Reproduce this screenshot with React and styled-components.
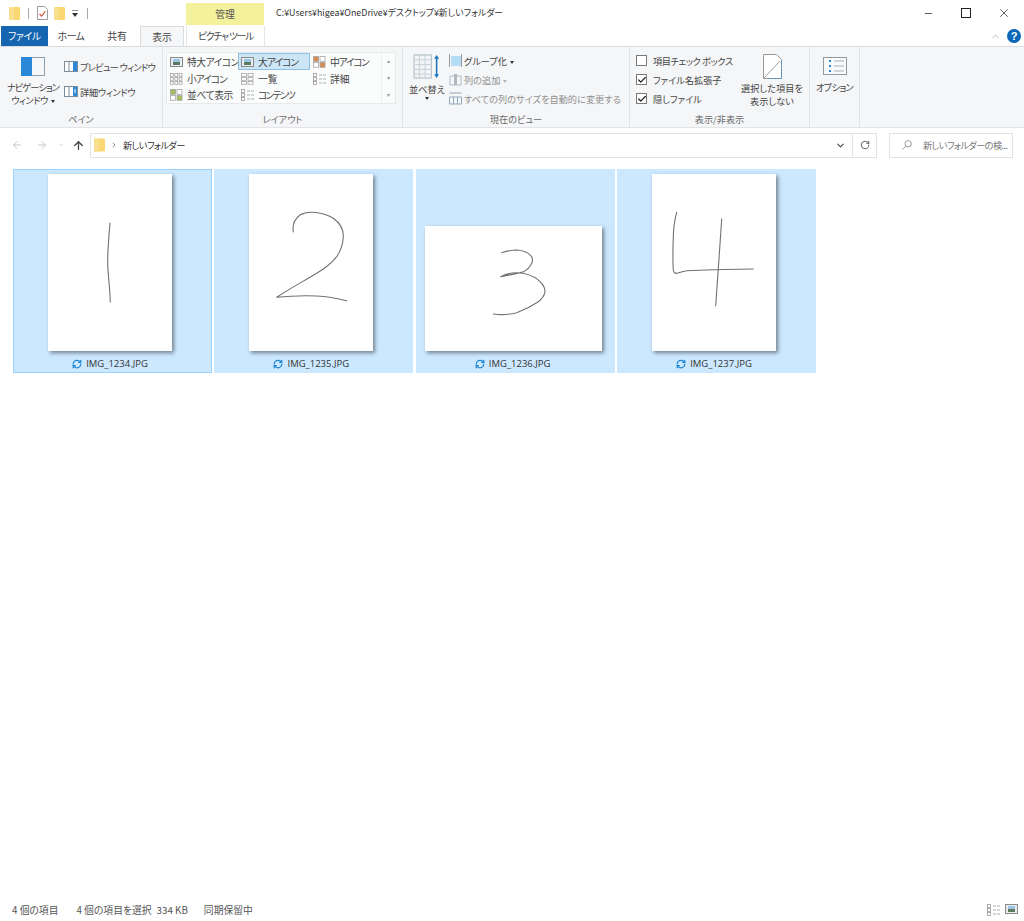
import React from 'react'
import styled, { createGlobalStyle } from 'styled-components'
import { ArrowLeft, ArrowRight, ArrowUp, ChevronDown, ChevronRight, ChevronUp, RotateCw, RefreshCw, Minus, X, Check } from 'lucide-react'

const GlobalStyle = createGlobalStyle`
  html, body {
    margin: 0;
    padding: 0;
    background: #fff;
    overflow: hidden;
    font-family: "Noto Sans CJK JP", "Noto Sans", sans-serif;
    color: #3c3c3c;
  }
  * { box-sizing: border-box; }
  svg { flex: none; }
`

const Window = styled.div`
  width: 1024px;
  height: 921px;
  display: flex;
  flex-direction: column;
  font-size: 9.8px;
  line-height: 12px;
  font-feature-settings: "palt";
`

// kana runs are set much narrower than kanji in the reference
const Tight = styled.span`
  letter-spacing: ${p => p.$ls}px;
  white-space: nowrap;
`

/* title bar */
const TitleBar = styled.div`
  height: 26px;
  display: flex;
  align-items: flex-start;
  padding-left: 9px;
`

const Quick = styled.div`
  width: 177px;
  height: 26px;
  display: flex;
  align-items: center;
  gap: 6px;
`

const QuickSep = styled.span`
  width: 1px;
  height: 11px;
  background: #a8a8a8;
  margin: 0 ${p => p.$m || 2}px;
`

const ManageTab = styled.div`
  width: 78px;
  height: 22px;
  margin-top: 3px;
  background: #f4f19d;
  display: flex;
  align-items: center;
  justify-content: center;
  color: #555;
`

const TitleText = styled.div`
  margin-left: 12px;
  margin-top: 7px;
  color: #333;
  flex: 1;
  font-size: 8.9px;
`

const WinButtons = styled.div`
  display: flex;
  width: 115px;
  height: 26px;
  padding-right: 1px;
  align-items: center;
  color: #222;
  & > span {
    flex: 1;
    display: flex;
    justify-content: center;
  }
`

/* tabs */
const TabRow = styled.div`
  height: 20px;
  display: flex;
  align-items: stretch;
  padding-left: 1px;
  position: relative;
`

const Tab = styled.div`
  width: ${p => p.$w}px;
  margin-left: ${p => p.$ml || 0}px;
  display: flex;
  align-items: center;
  justify-content: center;
  white-space: nowrap;
  color: ${p => (p.$file ? '#fff' : '#444')};
  background: ${p => (p.$file ? '#1565b0' : p.$active ? '#f5f6f7' : 'transparent')};
  border: ${p => (p.$active ? '1px solid #dadbdc' : 'none')};
  border-bottom: none;
`

const PictureTab = styled(Tab)`
  background: #fff;
  border: 1px solid #e6e6e6;
  border-top: none;
  border-bottom: none;
`

const HelpArea = styled.div`
  margin-left: auto;
  display: flex;
  align-items: center;
  gap: 6px;
  padding-right: 3px;
`

const HelpDot = styled.span`
  width: 14px;
  height: 14px;
  border-radius: 50%;
  background: #0b68b8;
  color: #fff;
  font: bold 11px/14px "Liberation Sans", sans-serif;
  text-align: center;
`

/* ribbon */
const Ribbon = styled.div`
  height: 82px;
  display: flex;
  background: #f5f6f7;
  border-top: 1px solid #dadbdc;
  border-bottom: 1px solid #e3e4e5;
  font-size: 9.2px;
`

const Group = styled.div`
  width: ${p => p.$w}px;
  display: flex;
  flex-direction: column;
  border-right: 1px solid #e2e3e4;
`

const GroupBody = styled.div`
  flex: 1;
  display: flex;
  min-height: 0;
  position: relative;
`

const GroupLabel = styled.div`
  height: 18px;
  text-align: center;
  color: #6a6a6a;
  line-height: 20px;
`

const BigButton = styled.div`
  width: ${p => p.$w}px;
  margin-left: ${p => p.$ml || 0}px;
  padding-top: ${p => p.$pt || 8}px;
  display: flex;
  flex-direction: column;
  align-items: center;
  text-align: center;
  color: #444;
  white-space: nowrap;
  line-height: 13px;
  & > svg { margin-bottom: ${p => p.$gap ?? 5}px; }
`

const SmallCol = styled.div`
  display: flex;
  flex-direction: column;
  flex: none;
  width: ${p => (p.$w ? `${p.$w}px` : 'auto')};
  margin-left: ${p => p.$ml || 0}px;
  padding-top: ${p => p.$pt || 0}px;
  gap: ${p => p.$gap || 0}px;
`

const SmallRow = styled.div`
  height: ${p => p.$h || 19}px;
  display: flex;
  align-items: center;
  gap: 2px;
  white-space: nowrap;
  color: ${p => (p.$muted ? '#8f8f8f' : '#444')};
`

const Caret = styled.span`
  display: inline-block;
  width: 0;
  height: 0;
  margin-left: ${p => p.$ml ?? 3}px;
  vertical-align: middle;
  border-left: 2.5px solid transparent;
  border-right: 2.5px solid transparent;
  border-top: 3px solid ${p => p.$color || '#333'};
`

const SortCaret = styled(Caret)`
  margin: 1px 0 0;
`

const Gallery = styled.div`
  margin: 5px 0 0 3px;
  width: 230px;
  height: 52px;
  display: flex;
  background: #fbfcfc;
  border: 1px solid #e8e9ea;
  font-size: 9.8px;
`

const GalleryGrid = styled.div`
  flex: 1;
  display: grid;
  grid-template-columns: 71px 72px 1fr;
  grid-template-rows: 17px 17px 16px;
`

const GalleryItem = styled.div`
  display: flex;
  align-items: center;
  gap: 4px;
  padding-left: 2px;
  white-space: nowrap;
  color: #444;
  background: ${p => (p.$on ? '#cde6f7' : 'transparent')};
  border: 1px solid ${p => (p.$on ? '#8fc1e3' : 'transparent')};
`

const GalleryScroll = styled.div`
  width: 14px;
  display: flex;
  flex-direction: column;
  align-items: center;
  justify-content: space-around;
  border-left: 1px solid #eeeff0;
  color: #9a9a9a;
  font-size: 6px;
`

const Box = styled.span`
  width: 11px;
  height: 11px;
  flex: none;
  border: 1px solid #7a7a7a;
  background: #fff;
  display: flex;
  align-items: center;
  justify-content: center;
  margin-right: 4px;
  color: #222;
`

/* address bar */
const AddressRow = styled.div`
  height: 34px;
  display: flex;
  align-items: center;
  padding: 0 11px 0 0;
  font-size: 9.2px;
`

const NavArrows = styled.div`
  width: 90px;
  display: flex;
  align-items: center;
  padding-left: 11px;
  color: #c8c8c8;
  & > svg:nth-child(2) { margin-left: 13px; }
  & > svg:nth-child(3) { margin-left: 9px; }
  & > svg:nth-child(4) { margin-left: 7px; color: #444; }
`

const AddressBox = styled.div`
  width: 787px;
  height: 25px;
  display: flex;
  align-items: center;
  border: 1px solid #e3e3e3;
  padding-left: 3px;
  color: #333;
  gap: 5px;
`

const AddressEnd = styled.div`
  margin-left: auto;
  display: flex;
  align-items: center;
  height: 100%;
  & > span {
    width: 24px;
    height: 100%;
    display: flex;
    align-items: center;
    justify-content: center;
    color: #444;
  }
  & > span:last-child { border-left: 1px solid #e3e3e3; }
`

const SearchBox = styled.div`
  margin-left: 12px;
  width: 124px;
  height: 25px;
  display: flex;
  align-items: center;
  border: 1px solid #e3e3e3;
  padding-left: 12px;
  gap: 11px;
  color: #777;
  white-space: nowrap;
`

/* files */
const FileArea = styled.div`
  flex: 1;
  display: flex;
  align-items: flex-start;
  gap: 2.33px;
  padding: 7px 0 0 13px;
`

const FileItem = styled.div`
  width: 199px;
  height: 204px;
  background: #cce8ff;
  border: 1px solid ${p => (p.$first ? '#99d1ff' : '#cce8ff')};
  padding: 4px 5px 0 0;
  display: flex;
  flex-direction: column;
  align-items: center;
`

const ThumbSlot = styled.div`
  flex: none;
  height: 177px;
  padding-left: ${p => (p.$wide ? 2 : 0)}px;
  display: flex;
  align-items: flex-end;
`

const Thumb = styled.svg`
  display: block;
  background: #fff;
  box-shadow: 2px 2px 4px rgba(0, 0, 0, 0.45);
`

const FileName = styled.div`
  flex: 1;
  padding-top: 4px;
  display: flex;
  align-items: center;
  gap: 4px;
  color: #333;
  font-family: "Open Sans", "Noto Sans", sans-serif;
  font-size: 9.5px;
`

/* status bar */
const StatusBar = styled.div`
  height: 22px;
  display: flex;
  align-items: center;
  padding: 0 6px 0 12px;
  color: #555;
`

const StatusText = styled.span`
  margin-left: ${p => p.$ml || 0}px;
`

const StatusIcons = styled.div`
  margin-left: auto;
  display: flex;
  gap: 5px;
`

const Folder = ({ w = 11, h = 13 }) => (
  <svg width={w} height={h} viewBox="0 0 11 13">
    <rect x="0" y="0" width="11" height="13" rx="1" fill="#fbd774" />
    <rect x="0" y="0" width="5" height="13" fill="#f8e08e" />
  </svg>
)

const Tiles = ({ c = 3, r = 3, color = '#a5a5a5', accent }) => (
  <svg width="13" height="12" viewBox="0 0 13 12">
    {Array.from({ length: r * c }).map((_, i) => (
      <rect
        key={i}
        x={(i % c) * (13 / c) + 0.5}
        y={Math.floor(i / c) * (12 / r) + 0.5}
        width={13 / c - 1.5}
        height={12 / r - 1.2}
        fill={accent && i % 3 === 0 ? accent : '#fff'}
        stroke={color}
        strokeWidth="0.8"
      />
    ))}
  </svg>
)

const ListIcon = ({ rows = 3 }) => (
  <svg width="13" height="12" viewBox="0 0 13 12">
    {Array.from({ length: rows }).map((_, i) => (
      <g key={i} stroke="#9a9a9a" strokeWidth="0.8">
        <rect x="0.5" y={i * 4 + 0.5} width="3" height="3" fill="#fff" />
        <path d={`M6 ${i * 4 + 2}h7`} strokeDasharray="3 1" />
      </g>
    ))}
  </svg>
)

const LargeIcon = ({ w = 13, h = 10 }) => (
  <svg width={w} height={h} viewBox="0 0 13 10">
    <rect x="0.5" y="0.5" width="12" height="9" fill="#e9eef2" stroke="#8a8a8a" />
    <rect x="3" y="5" width="7" height="3" fill="#5e7a5e" />
    <rect x="3" y="2" width="7" height="3" fill="#9cc4e4" />
  </svg>
)

const PaneIcon = ({ detail }) => (
  <svg width="14" height="11" viewBox="0 0 14 11">
    <rect x="0.5" y="0.5" width="13" height="10" fill="#fff" stroke="#7c8c99" />
    <path d="M5 1v9" stroke="#7c8c99" />
    <rect x="9" y="1" width="4" height="9" fill="#2c8ad8" />
    {detail && <path d="M10 4h2M10 6h2" stroke="#fff" />}
  </svg>
)

const Thumbnail = ({ w, h, paths }) => (
  <Thumb width={w} height={h} viewBox={`0 0 ${w} ${h}`}>
    {paths.map(d => (
      <path key={d} d={d} fill="none" stroke="#6f7370" strokeWidth="1.1" strokeLinecap="round" strokeLinejoin="round" />
    ))}
  </Thumb>
)

const files = [
  { name: 'IMG_1234.JPG', w: 124, h: 177, paths: ['M62 49C61 62 59.5 76 59.7 89C60 102 62 115 62.3 128'] },
  { name: 'IMG_1235.JPG', w: 124, h: 177, paths: ['M44.3 58C43 50 47 44 51 41C55 38.5 60 38 64.3 38.3C72 39 79 41 84.3 44.3C91 49 94.5 56 94.3 62.7C94 70 91.5 77 87.7 82.7C82 90 75 95 67.7 99.3C55 107 40 115 27.7 123.3C40 122 55 121.5 67.7 122C78 122.5 89 124.5 97.7 126.7'] },
  { name: 'IMG_1236.JPG', w: 177, h: 125, paths: ['M76.7 26.7C82 25 87 24 91.7 24C98 24.5 104 27 106.7 30.7C108 34 108 35 106.7 37.3C105 41 102 44 98.3 45.7C91 48 82 49.5 75.7 50.7C83 47 91 46 98.3 47.3C106 49 113 53 116.7 57.3C119 60 120 63 120 65.7C119.5 69 117 73 113.3 75.7C107 80 99 84 91.7 86.7C84 88.5 75 89 68.3 88'] },
  { name: 'IMG_1237.JPG', w: 124, h: 177, paths: ['M24.7 38.3C22.5 46 21.5 55 21.3 62.7C21 73 20.5 85 21.3 96C21.7 98.5 23 99.7 24.7 99.3C28 99 31 97 34.7 96.7C56 96 80 95.3 101.3 95', 'M69.7 45C68 72 65.5 105 63.7 131.7'] },
]

const App = () => (
  <Window>
    <GlobalStyle />
    <TitleBar>
      <Quick>
        <Folder />
        <QuickSep />
        <svg width="11" height="14" viewBox="0 0 11 14">
          <path d="M.5.5h7l3 3v10H.5z" fill="#fff" stroke="#9a9a9a" />
          <path d="M2.5 8l2 2 4-5" fill="none" stroke="#d8583c" strokeWidth="1.2" />
        </svg>
        <Folder />
        <svg width="8" height="7" viewBox="0 0 8 7">
          <path d="M1 0h6" stroke="#333" />
          <path d="M1 3h6L4 7z" fill="#333" />
        </svg>
        <QuickSep $m={0} />
      </Quick>
      <ManageTab>管理</ManageTab>
      <TitleText>C:¥Users¥higea¥OneDrive¥デスクトップ¥新しいフォルダー</TitleText>
      <WinButtons>
        <span><Minus size={11} strokeWidth={1.6} /></span>
        <span>
          <svg width="10" height="10" viewBox="0 0 10 10">
            <rect x="0.5" y="0.5" width="9" height="9" fill="none" stroke="currentColor" />
          </svg>
        </span>
        <span><X size={14} strokeWidth={1.2} /></span>
      </WinButtons>
    </TitleBar>

    <TabRow>
      <Tab $file $w={47}><Tight $ls={-0.2}>ファイル</Tight></Tab>
      <Tab $w={46}><Tight $ls={-0.5}>ホーム</Tight></Tab>
      <Tab $w={46}>共有</Tab>
      <Tab $active $w={44}>表示</Tab>
      <PictureTab $w={79} $ml={2}><Tight $ls={-1.2}>ピクチャ ツール</Tight></PictureTab>
      <HelpArea>
        <ChevronUp size={11} color="#b5b5b5" />
        <HelpDot>?</HelpDot>
      </HelpArea>
    </TabRow>

    <Ribbon>
      <Group $w={163}>
        <GroupBody>
          <BigButton $w={58} $ml={4} $pt={10}>
            <svg width="24" height="19" viewBox="0 0 24 19">
              <rect x="0.5" y="0.5" width="23" height="18" fill="#f4f6f8" stroke="#8ca0b0" />
              <rect x="0" y="0" width="11" height="19" fill="#2b88d8" />
            </svg>
            <Tight $ls={-0.9}>ナビゲーション</Tight>
            <span><Tight $ls={-0.5}>ウィンドウ</Tight><Caret /></span>
          </BigButton>
          <SmallCol $ml={2} $pt={10} $gap={6}>
            <SmallRow><PaneIcon /><Tight $ls={-0.7}>プレビュー ウィンドウ</Tight></SmallRow>
            <SmallRow><PaneIcon detail /><Tight $ls={-0.3}>詳細ウィンドウ</Tight></SmallRow>
          </SmallCol>
        </GroupBody>
        <GroupLabel>ペイン</GroupLabel>
      </Group>

      <Group $w={240}>
        <GroupBody>
          <Gallery>
            <GalleryGrid>
              <GalleryItem><LargeIcon /><Tight $ls={-0.5}>特大アイコン</Tight></GalleryItem>
              <GalleryItem $on><LargeIcon /><Tight $ls={-1}>大アイコン</Tight></GalleryItem>
              <GalleryItem><Tiles c={2} r={2} accent="#d98a4a" /><Tight $ls={-1.3}>中アイコン</Tight></GalleryItem>
              <GalleryItem><Tiles /><Tight $ls={-1.1}>小アイコン</Tight></GalleryItem>
              <GalleryItem><Tiles c={2} />一覧</GalleryItem>
              <GalleryItem><ListIcon />詳細</GalleryItem>
              <GalleryItem><Tiles c={2} r={2} accent="#a8bc58" /><Tight $ls={-0.4}>並べて表示</Tight></GalleryItem>
              <GalleryItem><ListIcon /><Tight $ls={-1.7}>コンテンツ</Tight></GalleryItem>
            </GalleryGrid>
            <GalleryScroll>
              <span>▴</span>
              <span>▾</span>
              <span>▾</span>
            </GalleryScroll>
          </Gallery>
        </GroupBody>
        <GroupLabel>レイアウト</GroupLabel>
      </Group>

      <Group $w={227}>
        <GroupBody>
          <BigButton $w={42} $ml={3} $pt={7} $gap={4}>
            <svg width="28" height="25" viewBox="0 0 28 26">
              <rect x="0.5" y="1" width="18" height="24" fill="#f2f4f5" stroke="#a9b6c0" />
              <path d="M1 6h18M1 11h18M1 16h18M1 21h18M6 1v24M12 1v24" stroke="#c5cfd6" />
              <path d="M24 3v20" stroke="#1c74bd" strokeWidth="1.6" />
              <path d="M21.5 5L24 1l2.5 4zM21.5 21L24 25l2.5-4z" fill="#1c74bd" />
            </svg>
            <span>並べ替え</span>
            <SortCaret />
          </BigButton>
          <SmallCol $ml={1} $pt={4}>
            <SmallRow>
              <svg width="13" height="13" viewBox="0 0 13 13">
                <rect x="2" y="2" width="10" height="10" fill="#b6dcf7" />
                <path d="M.5 0v13M12.5 0v13" stroke="#9a9a9a" />
              </svg>
              <span>グループ化<Caret /></span>
            </SmallRow>
            <SmallRow $muted>
              <svg width="13" height="13" viewBox="0 0 13 13">
                <path d="M1 3h11v9H1z" fill="none" stroke="#a9bcca" />
                <rect x="5" y="1" width="3" height="11" fill="#b0b8be" />
              </svg>
              <span>列の追加<Caret $color="#b5b5b5" /></span>
            </SmallRow>
            <SmallRow $muted>
              <svg width="13" height="13" viewBox="0 0 13 13">
                <path d="M.5 1h12M.5 5h12v7H.5zM4.5 5v7M8.5 5v7" fill="none" stroke="#8fa9bc" />
              </svg>
              すべての列のサイズを自動的に変更する
            </SmallRow>
          </SmallCol>
        </GroupBody>
        <GroupLabel>現在のビュー</GroupLabel>
      </Group>

      <Group $w={180}>
        <GroupBody>
          <SmallCol $ml={6} $pt={4} $w={100}>
            <SmallRow><Box /><Tight $ls={-0.4}>項目チェック ボックス</Tight></SmallRow>
            <SmallRow><Box><Check size={10} strokeWidth={3} /></Box>ファイル名拡張子</SmallRow>
            <SmallRow><Box><Check size={10} strokeWidth={3} /></Box>隠しファイル</SmallRow>
          </SmallCol>
          <BigButton $w={72} $pt={7} $gap={3}>
            <svg width="19" height="25" viewBox="0 0 19 25">
              <path d="M.5.5h13l5 5v19H.5z" fill="#fff" stroke="#9a9a9a" />
              <path d="M18.5 6v18.5H4" fill="none" stroke="#3f8fd0" strokeDasharray="1.5 1.5" />
              <path d="M1 24L17 7" stroke="#9a9a9a" />
            </svg>
            <span>選択した項目を</span>
            <span>表示しない</span>
          </BigButton>
        </GroupBody>
        <GroupLabel>表示/非表示</GroupLabel>
      </Group>

      <Group $w={50}>
        <GroupBody>
          <BigButton $w={49} $pt={10} $gap={6}>
            <svg width="24" height="18" viewBox="0 0 24 18">
              <rect x="0.5" y="0.5" width="23" height="17" fill="#f9fafb" stroke="#8f9aa3" />
              <path d="M6 4h2M6 9h2M6 14h2" stroke="#2b88d8" strokeWidth="2" />
              <path d="M11 4h10M11 9h10M11 14h10" stroke="#a9b0b6" />
            </svg>
            <Tight $ls={-0.6}>オプション</Tight>
          </BigButton>
        </GroupBody>
      </Group>
    </Ribbon>

    <AddressRow>
      <NavArrows>
        <ArrowLeft size={12} />
        <ArrowRight size={12} />
        <ChevronDown size={8} />
        <ArrowUp size={13} strokeWidth={2.4} />
      </NavArrows>
      <AddressBox>
        <Folder w={11} h={14} />
        <ChevronRight size={8} color="#555" />
        <Tight $ls={-0.6}>新しいフォルダー</Tight>
        <AddressEnd>
          <span><ChevronDown size={11} strokeWidth={2.4} /></span>
          <span><RotateCw size={10} /></span>
        </AddressEnd>
      </AddressBox>
      <SearchBox>
        <svg width="10" height="10" viewBox="0 0 10 10">
          <circle cx="6.2" cy="3.8" r="3.2" fill="none" stroke="#999" />
          <path d="M3.8 6.2L.6 9.4" stroke="#999" />
        </svg>
        <Tight $ls={-0.6}>新しいフォルダーの検...</Tight>
      </SearchBox>
    </AddressRow>

    <FileArea>
      {files.map((f, i) => (
        <FileItem key={f.name} $first={i === 0}>
          <ThumbSlot $wide={f.w > f.h}>
            <Thumbnail w={f.w} h={f.h} paths={f.paths} />
          </ThumbSlot>
          <FileName>
            <RefreshCw size={10} color="#1f86d0" strokeWidth={3} />
            {f.name}
          </FileName>
        </FileItem>
      ))}
    </FileArea>

    <StatusBar>
      <StatusText>4 個の項目</StatusText>
      <StatusText $ml={18}>4 個の項目を選択</StatusText>
      <StatusText $ml={5}>334 KB</StatusText>
      <StatusText $ml={16}>同期保留中</StatusText>
      <StatusIcons>
        <ListIcon />
        <LargeIcon />
      </StatusIcons>
    </StatusBar>
  </Window>
)

export default App
